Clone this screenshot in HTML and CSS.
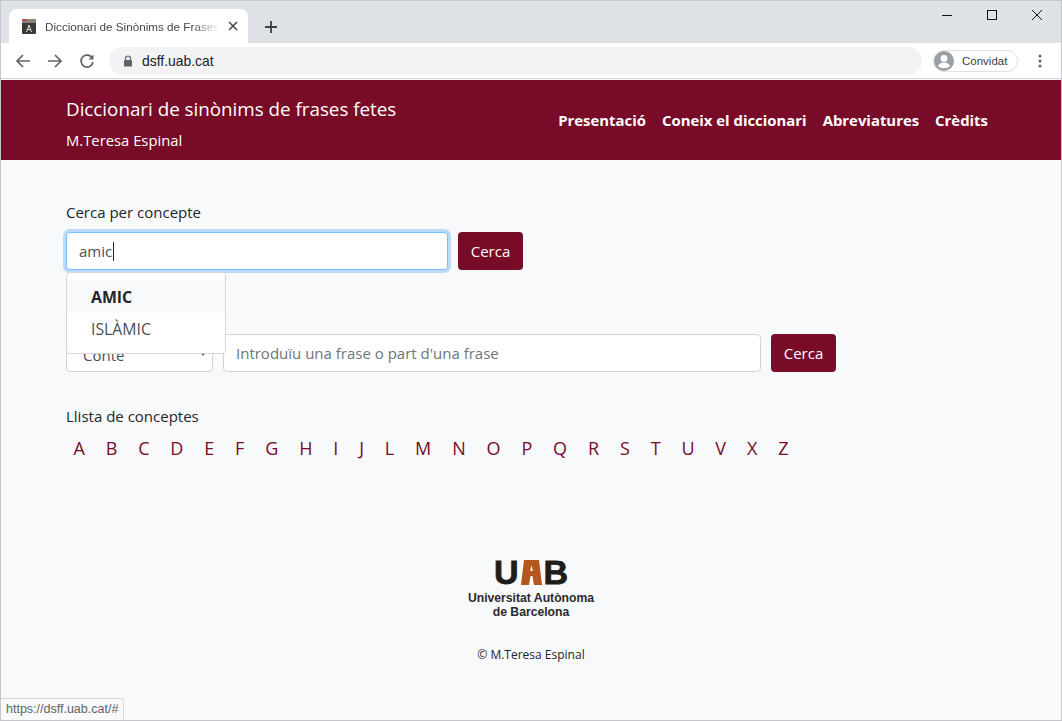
FILE: index.html
```html
<!DOCTYPE html>
<html lang="ca">
<head>
  <meta charset="UTF-8">
  <title>Diccionari de Sinònims de Frases Fetes</title>
  <link rel="stylesheet" href="styles.css">
</head>
<body>
  <div class="window">

    <!-- Browser tabs -->
    <div class="tab-strip">
      <div class="tab">
        <svg class="favicon" width="16" height="17" viewBox="0 0 16 17">
          <rect x="1" y="1" width="14" height="15" rx="1" fill="#3c3a36"/>
          <rect x="1" y="1" width="14" height="4" fill="#8d8078"/>
          <rect x="2" y="1" width="3" height="2" fill="#d8343c"/>
          <path d="M5.500 14l2.500-7 2.500 7M6.500 11.500h3" fill="none" stroke="#e4e0da" stroke-width="1"/>
        </svg>
        <span class="tab-title">Diccionari de Sinònims de Frases</span>
        <svg class="tab-close" width="10" height="10" viewBox="0 0 10 10">
          <path d="M1 1l8 8M9 1l-8 8" stroke="#45484c" stroke-width="1.600"/>
        </svg>
      </div>
      <svg class="new-tab" width="12" height="12" viewBox="0 0 12 12">
        <path d="M6 0v12M0 6h12" stroke="#3c4043" stroke-width="1.800"/>
      </svg>
      <div class="window-controls">
        <svg width="12" height="12" viewBox="0 0 12 12"><path d="M1 6.500h10" stroke="#111" stroke-width="1"/></svg>
        <svg width="12" height="12" viewBox="0 0 12 12"><rect x="1.500" y="1.500" width="9" height="9" fill="none" stroke="#111" stroke-width="1"/></svg>
        <svg width="12" height="12" viewBox="0 0 12 12"><path d="M1 1l10 10M11 1L1 11" stroke="#111" stroke-width="1"/></svg>
      </div>
    </div>

    <!-- Browser toolbar -->
    <div class="toolbar">
      <svg width="16" height="16" viewBox="0 0 16 16"><path d="M15 8H2M8 2L2 8l6 6" fill="none" stroke="#5f6368" stroke-width="1.700"/></svg>
      <svg width="16" height="16" viewBox="0 0 16 16"><path d="M1 8h13M8 2l6 6-6 6" fill="none" stroke="#5f6368" stroke-width="1.700"/></svg>
      <svg width="16" height="16" viewBox="0 0 16 16"><path d="M13.500 5.500A6 6 0 1 0 14 9" fill="none" stroke="#5f6368" stroke-width="1.700"/><path d="M14.500 1.500v5h-5z" fill="#5f6368"/></svg>
      <div class="address-bar">
        <svg width="10" height="12" viewBox="0 0 10 12"><path d="M2.500 5V3.500a2.500 2.500 0 0 1 5 0V5" fill="none" stroke="#5f6368" stroke-width="1.200"/><rect x="1" y="5" width="8" height="6.500" rx="1" fill="#5f6368"/></svg>
        <span>dsff.uab.cat</span>
      </div>
      <div class="profile">
        <svg width="20" height="20" viewBox="0 0 20 20">
          <circle cx="10" cy="10" r="10" fill="#9aa0a6"/>
          <circle cx="10" cy="7.500" r="3.400" fill="#fff"/>
          <path d="M3.800 15c1.500-2.600 3.800-3.400 6.200-3.400s4.700.8 6.200 3.400c-3.300 3-9.100 3-12.400 0z" fill="#fff"/>
        </svg>
        <span>Convidat</span>
      </div>
      <svg class="menu-dots" width="4" height="14" viewBox="0 0 4 14"><circle cx="2" cy="2" r="1.500" fill="#5f6368"/><circle cx="2" cy="7" r="1.500" fill="#5f6368"/><circle cx="2" cy="12" r="1.500" fill="#5f6368"/></svg>
    </div>

    <!-- Page -->
    <header class="site-header">
      <div class="site-brand">
        <div class="site-title">Diccionari de sinònims de frases fetes</div>
        <div class="site-author">M.Teresa Espinal</div>
      </div>
      <nav class="site-nav">
        <a href="#">Presentació</a>
        <a href="#">Coneix el diccionari</a>
        <a href="#">Abreviatures</a>
        <a href="#">Crèdits</a>
      </nav>
    </header>

    <main class="content">
      <label class="field-label">Cerca per concepte</label>
      <div class="search-row">
        <div class="concept-wrap">
          <input class="text-input concept-input" type="text" value="amic">
          <span class="text-caret"></span>
          <ul class="suggestions">
            <li class="active">AMIC</li>
            <li>ISLÀMIC</li>
          </ul>
        </div>
        <button class="btn">Cerca</button>
      </div>

      <div class="search-row phrase-row">
        <div class="select-box">Conte<span class="caret"></span></div>
        <input class="text-input phrase-input" type="text" placeholder="Introduïu una frase o part d'una frase">
        <button class="btn">Cerca</button>
      </div>

      <label class="field-label list-label">Llista de conceptes</label>
      <div class="letters">
        <a href="#">A</a><a href="#">B</a><a href="#">C</a><a href="#">D</a><a href="#">E</a><a href="#">F</a><a href="#">G</a><a href="#">H</a><a href="#">I</a><a href="#">J</a><a href="#">L</a><a href="#">M</a><a href="#">N</a><a href="#">O</a><a href="#">P</a><a href="#">Q</a><a href="#">R</a><a href="#">S</a><a href="#">T</a><a href="#">U</a><a href="#">V</a><a href="#">X</a><a href="#">Z</a>
      </div>
    </main>

    <footer class="site-footer">
      <div class="uab-mark">
        <span>U</span>
        <svg width="21" height="25" viewBox="0 0 21 25"><path d="M3 0h15l3 25h-8l-1.500-9h-2L8 25H0z" fill="#b5561f"/><path d="M10.500 5l1.300 6H9.200z" fill="#f8f9fa"/></svg>
        <span>B</span>
      </div>
      <div class="uab-name">Universitat Autònoma<br>de Barcelona</div>
      <div class="copyright">© M.Teresa Espinal</div>
    </footer>

    <div class="status-bubble">https://dsff.uab.cat/#</div>
  </div>
</body>
</html>
```

FILE: styles.css
```css
* {
  box-sizing: border-box;
}

html, body {
  margin: 0;
  height: 100%;
}

body {
  font-family: "Open Sans", "Noto Sans", sans-serif;
  background-color: #f8f9fa;
  color: #212529;
}

.window {
  position: relative;
  height: 721px;
  overflow: hidden;
  border: 1px solid #c4c6c9;
  border-top: 0;
  background-color: #f8f9fa;
}

/* Browser chrome */
.tab-strip {
  display: flex;
  align-items: flex-end;
  height: 43px;
  background-color: #dee1e6;
  border-top: 1px solid #c4c6c9;
  padding-left: 8px;
}

.tab {
  display: flex;
  align-items: center;
  width: 239px;
  height: 34px;
  padding: 0 10px 0 12px;
  background-color: #fff;
  border-radius: 8px 8px 0 0;
}

.favicon {
  flex: none;
  margin-right: 8px;
}

.tab-title {
  flex: 1;
  overflow: hidden;
  white-space: nowrap;
  font-family: "Liberation Sans", sans-serif;
  font-size: 11.700px;
  color: #45484c;
  -webkit-mask-image: linear-gradient(to right, #000 85%, transparent);
  mask-image: linear-gradient(to right, #000 85%, transparent);
}

.tab-close {
  flex: none;
  margin-left: 9px;
}

.new-tab {
  margin: 0 0 10px 17px;
}

.window-controls {
  display: flex;
  gap: 33px;
  margin-left: auto;
  align-self: flex-start;
  padding: 8px 18px 0 0;
}

.toolbar {
  display: flex;
  align-items: center;
  height: 36px;
  padding: 0 19px 0 14px;
  background-color: #fff;
  border-bottom: 1px solid #d3d5d8;
}

.toolbar > svg {
  flex: none;
  margin-right: 16px;
}

.toolbar > .menu-dots {
  margin: 0 0 0 20px;
}

.address-bar {
  display: flex;
  align-items: center;
  gap: 9px;
  flex: 1;
  height: 28px;
  margin: 0 11px 0 -2px;
  padding-left: 14px;
  background-color: #f1f3f4;
  border-radius: 14px;
  font-family: "Liberation Sans", sans-serif;
  font-size: 13.900px;
  color: #202124;
}

.profile {
  display: flex;
  align-items: center;
  gap: 8px;
  width: 85px;
  height: 22px;
  padding-left: 0;
  border: 1px solid #dfe1e5;
  border-radius: 11px;
  font-family: "Liberation Sans", sans-serif;
  font-size: 11.500px;
  color: #3c4043;
}

/* Site header */
.site-header {
  display: flex;
  align-items: center;
  justify-content: space-between;
  height: 80px;
  margin-top: 1px;
  padding: 0 73px 0 65px;
  background-color: #770b28;
  color: #fff;
}

.site-brand {
  align-self: flex-start;
  padding-top: 16px;
}

.site-title {
  font-size: 18.800px;
  line-height: 27px;
  margin-bottom: 5px;
}

.site-author {
  font-size: 14.800px;
  line-height: 24px;
}

.site-nav {
  display: flex;
  gap: 16px;
}

.site-nav a {
  color: #fff;
  font-size: 14.900px;
  font-weight: 700;
  text-decoration: none;
}

/* Search forms */
.content {
  padding: 40px 65px 0;
}

.field-label {
  display: block;
  font-size: 15px;
  line-height: 24px;
  margin-bottom: 8px;
}

.phrase-row {
  margin-top: 64px;
}

.list-label {
  margin-top: 32px;
  margin-bottom: 8px;
}

.search-row {
  display: flex;
  gap: 10px;
}

.concept-wrap {
  position: relative;
}

.text-input {
  display: block;
  height: 38px;
  padding: 0 12px;
  background-color: #fff;
  border: 1px solid #ced4da;
  border-radius: 4px;
  font-family: inherit;
  font-size: 15px;
  color: #495057;
  outline: none;
}

.text-input::placeholder {
  color: #6c757d;
  opacity: 1;
}

.concept-input {
  width: 382px;
  border-color: #80bdff;
  box-shadow: 0 0 0 3px rgba(0, 123, 255, 0.25);
}

.text-caret {
  position: absolute;
  top: 10px;
  left: 47px;
  width: 1px;
  height: 19px;
  background-color: #212529;
}

.phrase-input {
  width: 538px;
}

.suggestions {
  position: absolute;
  top: 40px;
  left: 0;
  z-index: 5;
  width: 160px;
  margin: 0;
  padding: 8px 0;
  list-style: none;
  background-color: #fff;
  border: 1px solid #d5d7d9;
  border-radius: 4px;
  font-size: 15.800px;
  color: #495057;
}

.suggestions li {
  height: 32px;
  line-height: 32px;
  padding-left: 24px;
}

.suggestions .active {
  background-color: #f8f9fa;
  color: #212529;
  font-weight: 700;
}

.select-box {
  position: relative;
  width: 147px;
  height: 38px;
  padding-left: 16px;
  line-height: 40px;
  background-color: #fff;
  border: 1px solid #ced4da;
  border-radius: 4px;
  font-size: 15px;
  color: #495057;
}

.caret {
  position: absolute;
  top: 18px;
  right: 7px;
  border: 2px solid transparent;
  border-top: 3px solid #343a40;
}

.btn {
  width: 65px;
  height: 38px;
  padding: 0;
  border: 0;
  border-radius: 4px;
  background-color: #770b28;
  color: #fff;
  font-family: inherit;
  font-size: 15px;
}

.letters {
  display: flex;
  margin-left: -3px;
}

.letters a {
  padding: 0 10.430px;
  font-size: 18px;
  line-height: 24px;
  color: #770b28;
  text-decoration: none;
}

/* Footer */
.site-footer {
  display: flex;
  flex-direction: column;
  align-items: center;
  margin-top: 100px;
  width: 1060px;
}

.uab-mark {
  display: flex;
  align-items: center;
  gap: 2px;
  height: 25px;
  font-family: "Liberation Sans", sans-serif;
  font-size: 34px;
  font-weight: 700;
  color: #1d1d1b;
  -webkit-text-stroke: 0.800px #1d1d1b;
}

.uab-name {
  margin-top: 6px;
  font-family: "Liberation Sans", sans-serif;
  font-size: 12.200px;
  font-weight: 700;
  line-height: 14px;
  text-align: center;
  color: #2b2b2b;
}

.copyright {
  margin-top: 27px;
  font-size: 12px;
  line-height: 18px;
}

/* Link preview at the bottom of the window */
.status-bubble {
  position: absolute;
  left: 0;
  bottom: 0;
  height: 22px;
  padding: 0 5px;
  background-color: #f8f9fa;
  border: 1px solid #d5d7d9;
  border-width: 1px 1px 0 0;
  border-radius: 0 3px 0 0;
  font-family: "Liberation Sans", sans-serif;
  font-size: 12.500px;
  line-height: 20px;
  color: #5f6368;
}
```
